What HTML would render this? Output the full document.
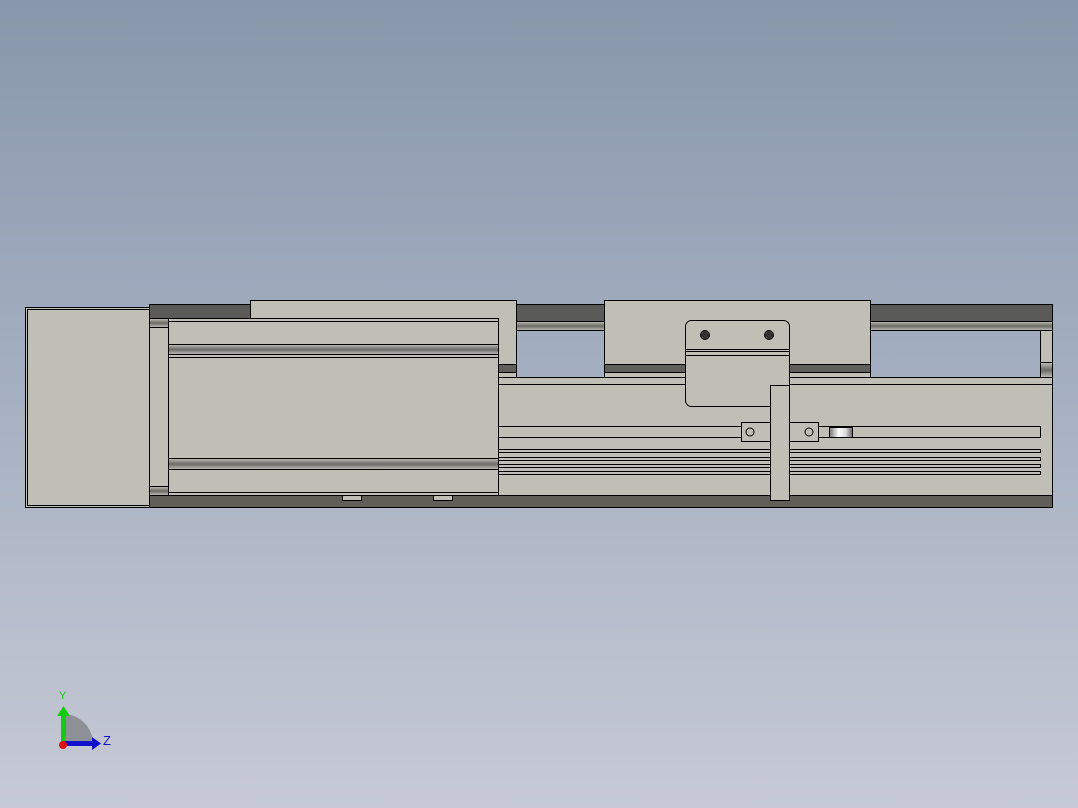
<!DOCTYPE html>
<html><head><meta charset="utf-8"><style>
html,body{margin:0;padding:0;width:1078px;height:808px;overflow:hidden}
body{background:linear-gradient(#8897ab,#a3aec0 45%,#c7cad6)}
svg{position:absolute;left:0;top:0}
</style></head><body>
<svg width="1078" height="808" viewBox="0 0 1078 808" xmlns="http://www.w3.org/2000/svg">
<defs>
<linearGradient id="g1" x1="0" y1="0" x2="0" y2="1"><stop offset="0" stop-color="#c0c0b8"/><stop offset="0.5" stop-color="#6a6a66"/><stop offset="1" stop-color="#c0c0b8"/></linearGradient>
<linearGradient id="g2" x1="0" y1="0" x2="1" y2="0"><stop offset="0" stop-color="#777"/><stop offset="0.4" stop-color="#fff"/><stop offset="0.7" stop-color="#ddd"/><stop offset="1" stop-color="#666"/></linearGradient>
</defs>
<g stroke="#000" stroke-width="1" fill="#bfbfb6" shape-rendering="crispEdges">
<rect x="149.5" y="304.5" width="903" height="17" fill="#5a5a58"/>
<rect x="149.5" y="321.5" width="903" height="9" fill="url(#g1)"/>
<rect x="1040.5" y="330.5" width="12" height="47"/>
<rect x="1040.5" y="362.5" width="12" height="15" fill="url(#g1)"/>
<rect x="250.5" y="300.5" width="266" height="77"/>
<rect x="498.5" y="364.5" width="18" height="8" fill="#5f5f5a"/>
<rect x="604.5" y="300.5" width="266" height="77"/>
<rect x="604.5" y="364.5" width="266" height="8" fill="#5f5f5a"/>
<rect x="498.5" y="377.5" width="554" height="118"/>
<line x1="498" y1="384.5" x2="1052" y2="384.5"/>
<rect x="149.5" y="495.5" width="903" height="12" fill="#5f5f58"/>
<rect x="342.5" y="495.5" width="19" height="5"/>
<rect x="433.5" y="495.5" width="19" height="5"/>
<rect x="25.5" y="307.5" width="124" height="200"/>
<line x1="27" y1="309.5" x2="149" y2="309.5"/><line x1="27" y1="505.5" x2="149" y2="505.5"/><line x1="27.5" y1="309" x2="27.5" y2="505"/>
<rect x="149.5" y="318.5" width="19" height="177"/>
<rect x="149.5" y="318.5" width="19" height="9" fill="url(#g1)"/>
<rect x="149.5" y="486.5" width="19" height="9" fill="url(#g1)"/>
<rect x="168.5" y="318.5" width="330" height="177"/>
<line x1="168" y1="321.5" x2="498" y2="321.5"/>
<rect x="168.5" y="344.5" width="330" height="10" fill="url(#g1)"/>
<line x1="168" y1="357.5" x2="498" y2="357.5"/>
<rect x="168.5" y="458.5" width="330" height="11" fill="url(#g1)"/>
<line x1="168" y1="492.5" x2="498" y2="492.5"/>
<rect x="498.5" y="426.5" width="542" height="11"/>
<rect x="829.5" y="427.5" width="23" height="10" fill="url(#g2)"/>
<rect x="498.5" y="449.5" width="542" height="3"/>
<rect x="498.5" y="457.5" width="542" height="3"/>
<rect x="498.5" y="464.5" width="542" height="3"/>
<rect x="498.5" y="471.5" width="542" height="3"/>
</g>
<g stroke="#000" stroke-width="1" fill="#bfbfb6">
<rect x="685.5" y="320.5" width="104" height="86" rx="6"/>
<line x1="685" y1="349.5" x2="789" y2="349.5"/><line x1="685" y1="351.5" x2="789" y2="351.5"/><line x1="685" y1="355.5" x2="789" y2="355.5"/>
<circle cx="705" cy="335" r="4.5" fill="#333"/><circle cx="769" cy="335" r="4.5" fill="#333"/>
<rect x="741.5" y="422.5" width="77" height="19" shape-rendering="crispEdges"/>
<circle cx="750" cy="432" r="4" fill="none"/><circle cx="809" cy="432" r="4" fill="none"/>
<rect x="770.5" y="385.5" width="19" height="115" shape-rendering="crispEdges"/>
</g>
<path d="M63 744 L63 714 A30 30 0 0 1 93 744 Z" fill="#8e9098"/>
<rect x="61" y="714" width="5" height="30" fill="#1c1"/>
<polygon points="57,716 63.5,706 70,716" fill="#1c1"/>
<rect x="63" y="741" width="30" height="5" fill="#11c"/>
<polygon points="92,737 101,743.5 92,750" fill="#11c"/>
<circle cx="63" cy="745" r="4" fill="#d11"/>
<text x="59" y="699" font-family="Liberation Sans,sans-serif" font-size="11" fill="#1c1">Y</text>
<text x="103" y="745" font-family="Liberation Sans,sans-serif" font-size="13" fill="#11c">Z</text>
</svg>
</body></html>
